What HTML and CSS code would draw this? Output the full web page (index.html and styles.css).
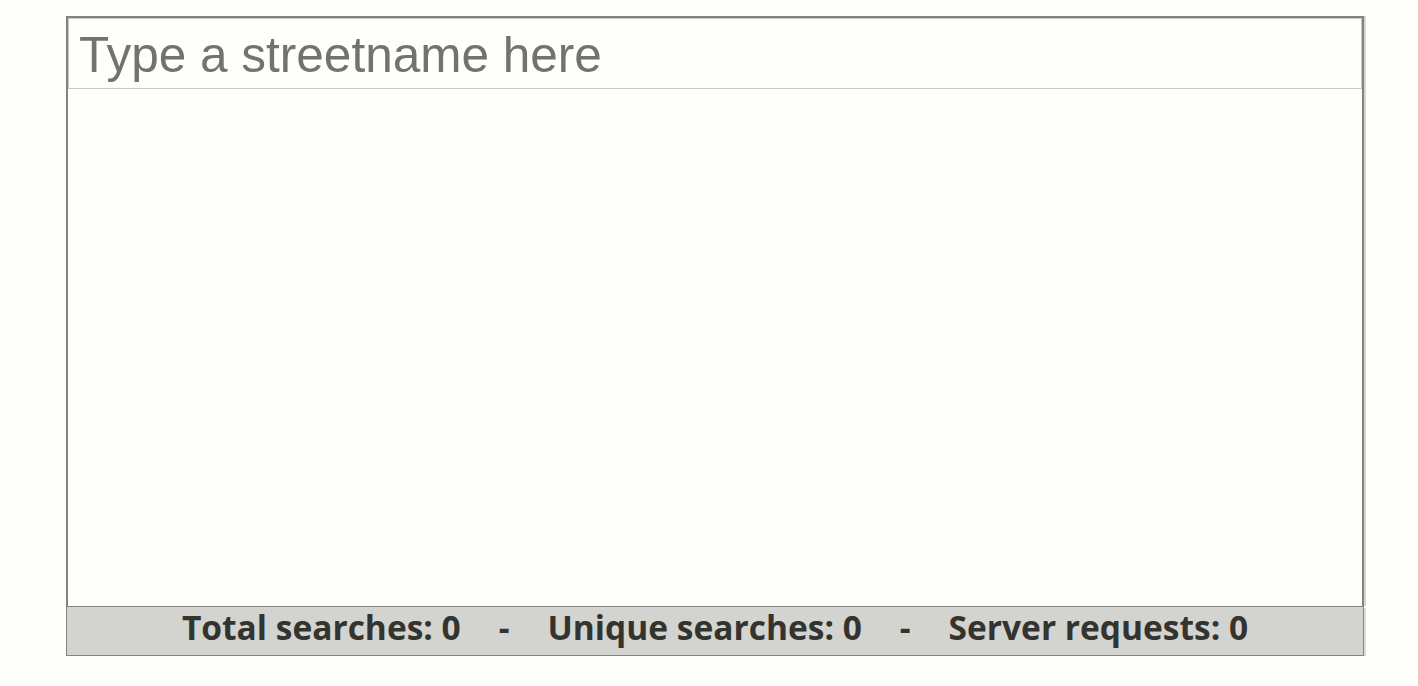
FILE: index.html
```html
<!DOCTYPE html>
<html>
<head>
<meta charset="utf-8">
<link rel="stylesheet" href="styles.css">
</head>
<body>
<div class="widget">
  <div class="main">
    <input class="search" type="text" placeholder="Type a streetname here">
    <div class="results"></div>
  </div>
  <div class="stats">
    <span class="stat">Total searches: 0</span>
    <span class="sep">-</span>
    <span class="stat">Unique searches: 0</span>
    <span class="sep">-</span>
    <span class="stat">Server requests: 0</span>
  </div>
</div>
</body>
</html>
```

FILE: styles.css
```css
html, body {
  margin: 0;
  padding: 0;
  background: #fefefb;
}
body {
  padding: 16px 0 0 66px;
}
.widget {
  width: 1298px;
  display: flex;
  flex-direction: column;
}
.main {
  height: 588px;
  border: 2px solid #82827e;
  border-bottom: none;
  background: #fefefc;
  display: flex;
  flex-direction: column;
  box-shadow: 2px 0 0 #d6d6d2;
}
.search {
  box-sizing: border-box;
  height: 71px;
  margin: 0;
  border: 1px solid #c8c8c4;
  background: #fefefc;
  padding: 2px 0 0 10px;
  font-family: "Liberation Sans", Arial, sans-serif;
  font-size: 49.5px;
  color: #6f6f6b;
  outline: none;
}
.search::placeholder {
  color: #72726e;
  opacity: 1;
}
.results {
  flex: 1;
}
.stats {
  box-sizing: border-box;
  height: 50px;
  border: 1px solid #85857f;
  background: #d3d3cf;
  box-shadow: 2px 2px 0 #dcdcd8;
  display: flex;
  justify-content: center;
  align-items: center;
  gap: 38px;
  font-family: "Open Sans", "Noto Sans", sans-serif;
  font-weight: 700;
  font-size: 33.5px;
  color: #333330;
  padding-bottom: 8px;
}
```
